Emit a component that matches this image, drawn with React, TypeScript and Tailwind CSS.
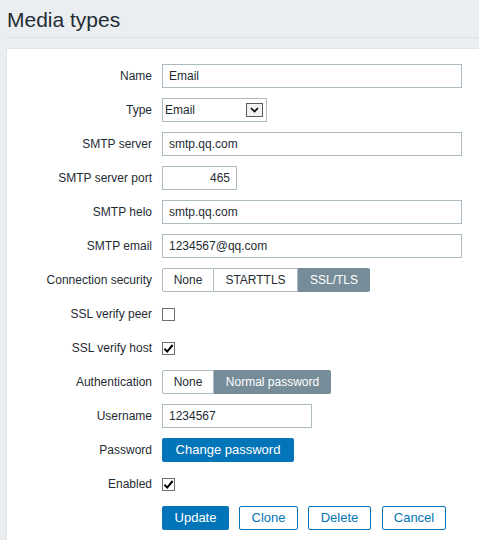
import React from "react";

const Check = () => (
  <svg width="11" height="11" viewBox="0 0 11 11" className="block">
    <path d="M1.5 5.8 L4.2 8.6 L9.6 2" fill="none" stroke="#000" strokeWidth="2" />
  </svg>
);

function Checkbox({ checked }: { checked?: boolean }) {
  return (
    <div className="w-[13px] h-[13px] border border-[#6f6f6f] bg-white flex items-center justify-center">
      {checked && <Check />}
    </div>
  );
}

function TextInput({ value, w, right }: { value: string; w: string; right?: boolean }) {
  return (
    <div
      className={`${w} h-[24px] border border-[#acbbc2] bg-white flex items-center px-[6px] ${
        right ? "justify-end" : ""
      }`}
    >
      <span>{value}</span>
    </div>
  );
}

function Label({ children }: { children: React.ReactNode }) {
  return <div className="h-[24px] flex items-center justify-end whitespace-nowrap">{children}</div>;
}

export default function App() {
  return (
    <div className="min-h-screen bg-[#ebeef1] font-['Liberation_Sans',Arial,sans-serif] text-[12px] text-[#1f2c33]">
      <div className="ml-[6px] pt-[8px] pb-[5px] border-b border-[#dbe1e5]">
        <h1 className="text-[21px] leading-[24px] pl-[1px] font-normal">Media types</h1>
      </div>
      <div className="ml-[6px] mt-[10px] bg-white border-l border-t border-[#dfe4e7] pt-[15px] pb-[20px]">
        <div className="grid grid-cols-[145px_1fr] gap-x-[10px] gap-y-[10px]">
          <Label>Name</Label>
          <div><TextInput value="Email" w="w-[300px]" /></div>

          <Label>Type</Label>
          <div>
            <div className="w-[105px] h-[24px] border border-[#acbbc2] bg-white flex items-center pl-[2px] pr-[3px] justify-between">
              <span>Email</span>
              <div className="w-[17px] h-[14px] border border-[#5a5a5a] bg-[#f3f3f3] flex items-center justify-center">
                <svg width="9" height="6" viewBox="0 0 9 6" className="block">
                  <path d="M1 1 L4.5 4.5 L8 1" fill="none" stroke="#000" strokeWidth="1.6" />
                </svg>
              </div>
            </div>
          </div>

          <Label>SMTP server</Label>
          <div><TextInput value="smtp.qq.com" w="w-[300px]" /></div>

          <Label>SMTP server port</Label>
          <div><TextInput value="465" w="w-[75px]" right /></div>

          <Label>SMTP helo</Label>
          <div><TextInput value="smtp.qq.com" w="w-[300px]" /></div>

          <Label>SMTP email</Label>
          <div><TextInput value="1234567@qq.com" w="w-[300px]" /></div>

          <Label>Connection security</Label>
          <div className="flex">
            <div className="w-[52px] h-[24px] border border-[#acbbc2] rounded-l-[2px] bg-white flex items-center justify-center">None</div>
            <div className="w-[84px] h-[24px] border-y border-r border-[#acbbc2] bg-white flex items-center justify-center">STARTTLS</div>
            <div className="w-[72px] h-[24px] bg-[#768d99] text-white rounded-r-[2px] flex items-center justify-center">SSL/TLS</div>
          </div>

          <Label>SSL verify peer</Label>
          <div className="h-[24px] flex items-center"><Checkbox /></div>

          <Label>SSL verify host</Label>
          <div className="h-[24px] flex items-center"><Checkbox checked /></div>

          <Label>Authentication</Label>
          <div className="flex">
            <div className="w-[52px] h-[24px] border border-[#acbbc2] rounded-l-[2px] bg-white flex items-center justify-center">None</div>
            <div className="w-[117px] h-[24px] bg-[#768d99] text-white rounded-r-[2px] flex items-center justify-center">Normal password</div>
          </div>

          <Label>Username</Label>
          <div><TextInput value="1234567" w="w-[150px]" /></div>

          <Label>Password</Label>
          <div>
            <div className="w-[132px] h-[24px] bg-[#0275b8] text-white text-[13px] rounded-[2px] flex items-center justify-center">
              Change password
            </div>
          </div>

          <Label>Enabled</Label>
          <div className="h-[24px] flex items-center"><Checkbox checked /></div>

          <div />
          <div className="flex gap-[10px] text-[13px]">
            <div className="w-[67px] h-[24px] bg-[#0275b8] text-white rounded-[2px] flex items-center justify-center">Update</div>
            <div className="w-[59px] h-[24px] border border-[#0275b8] text-[#0275b8] bg-white rounded-[2px] flex items-center justify-center">Clone</div>
            <div className="w-[63px] h-[24px] border border-[#0275b8] text-[#0275b8] bg-white rounded-[2px] flex items-center justify-center">Delete</div>
            <div className="w-[64px] h-[24px] border border-[#0275b8] text-[#0275b8] bg-white rounded-[2px] flex items-center justify-center ml-[1px]">Cancel</div>
          </div>
        </div>
      </div>
    </div>
  );
}
